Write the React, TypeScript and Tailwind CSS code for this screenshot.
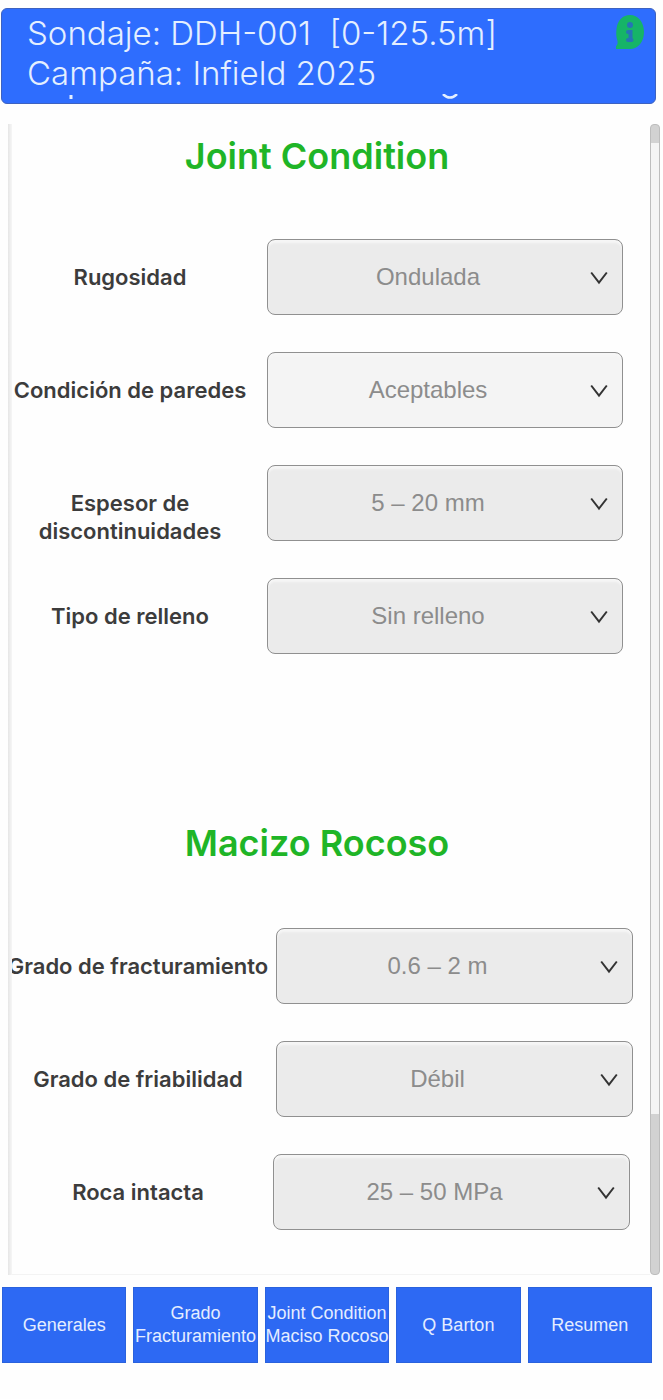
import clsx from "clsx";

type Field = {
  id: string;
  label: string;
  value: string;
  light?: boolean;
  narrow?: boolean;
};

const jointFields: Field[] = [
  { id: "rugosidad", label: "Rugosidad", value: "Ondulada" },
  { id: "paredes", label: "Condición de paredes", value: "Aceptables", light: true },
  { id: "espesor", label: "Espesor de discontinuidades", value: "5 – 20 mm" },
  { id: "relleno", label: "Tipo de relleno", value: "Sin relleno" },
];

const rockFields: Field[] = [
  { id: "fracturamiento", label: "Grado de fracturamiento", value: "0.6 – 2 m" },
  { id: "friabilidad", label: "Grado de friabilidad", value: "Débil" },
  { id: "roca", label: "Roca intacta", value: "25 – 50 MPa", narrow: true },
];

const tabs = [
  ["Generales"],
  ["Grado", "Fracturamiento"],
  ["Joint Condition", "Maciso Rocoso"],
  ["Q Barton"],
  ["Resumen"],
];

function SelectBox({ field }: { field: Field }) {
  return (
    <div className="relative min-w-0 flex-1">
      <select
        id={field.id}
        defaultValue={field.value}
        className={clsx(
          "block h-[76px] w-full appearance-none rounded-lg border border-[#909090] pr-10 pl-1.5 text-center font-['Liberation_Sans',Arial,sans-serif] text-[24px] text-[#8c8c8c] shadow-[inset_0_3px_2px_#f6f6f6]",
          field.light ? "bg-[#f4f4f4]" : "bg-[#ebebeb]"
        )}
      >
        <option>{field.value}</option>
      </select>
      <svg
        viewBox="0 0 18 14"
        className="pointer-events-none absolute top-8 right-[15px] h-3.5 w-[18px]"
        fill="none"
        stroke="#333"
        strokeWidth="2"
      >
        <path d="M1.2 1.5 L9 11.5 L16.8 1.5" />
      </svg>
    </div>
  );
}

function Header() {
  return (
    <header className="relative mt-2 mr-[7px] ml-px h-24 overflow-hidden rounded-md border border-[#3d62c0] bg-[#2e6dfe] pt-1 pl-[25px] text-[33px] leading-10 font-light text-[#e4efff]">
      <p className="whitespace-pre">Sondaje: DDH-001  [0-125.5m]</p>
      <p>Campaña: Infield 2025</p>
      <button aria-label="Información" className="absolute top-1.5 right-[11px]">
        <svg viewBox="0 0 28 34" className="h-[34px] w-7">
          <path
            d="M0 34 V31 Q2 30 1.5 26 C0 22 0 18 0.5 14 C1.5 5 7 0 14 0 C22 0 28 7 28 17 C28 27 22 34 14 34 Z"
            fill="#16b467"
          />
          <circle cx="14" cy="10" r="3" fill="#2574b5" />
          <path
            d="M12 17 H14.5 V25 M12 25 H15.5"
            fill="none"
            stroke="#2574b5"
            strokeWidth="4"
            strokeLinecap="round"
          />
        </svg>
      </button>
      {/* tail of the scrolled-out line */}
      <svg viewBox="0 0 390 6" className="absolute bottom-[3px] left-[66px] h-1.5 w-[390px]">
        <path d="M3 1 V5" stroke="#e4efff" strokeWidth="3" />
        <path d="M375 0 Q382 7 389 0" fill="none" stroke="#e4efff" strokeWidth="2.5" />
      </svg>
    </header>
  );
}

export default function App() {
  return (
    <div className="bg-[#fefefe] font-['Inter',sans-serif]">
      <div className="flow-root">
        <Header />
      </div>

      <main className="mt-5 mr-[3px] ml-2 flex">
        <div className="w-1 bg-linear-to-r from-[#e6e6e6] to-[#f6f6f6]" />
        <div className="min-w-0 flex-1 overflow-hidden border-b border-[#f3f3f3] pb-11">
          <section>
            <h2 className="pt-2 pr-7 text-center text-[36px] leading-[48px] font-semibold text-[#1fb527]">
              Joint Condition
            </h2>
            <div className="mt-[59px] flex flex-col gap-[37px] pr-[27px]">
              {jointFields.map((field) => (
                <div key={field.id} className="flex h-[76px] items-start gap-[11px]">
                  <label
                    htmlFor={field.id}
                    className="w-[244px] shrink-0 pt-6 pr-2 text-center text-[22px] leading-7 font-semibold text-[#3c3c3c]"
                  >
                    {field.label}
                  </label>
                  <SelectBox field={field} />
                </div>
              ))}
            </div>
          </section>

          <section className="mt-[165px]">
            <h2 className="pr-7 text-center text-[36px] leading-[48px] font-semibold text-[#1fb527]">
              Macizo Rocoso
            </h2>
            <div className="mt-[61px] flex flex-col gap-[37px]">
              {rockFields.map((field) => (
                <div
                  key={field.id}
                  className={clsx("flex h-[76px] items-start", field.narrow ? "gap-[9px] pr-5" : "gap-3 pr-[17px]")}
                >
                  <label
                    htmlFor={field.id}
                    className="flex w-[252px] shrink-0 justify-center pt-6 text-[22px] leading-7 font-semibold whitespace-nowrap text-[#3c3c3c]"
                  >
                    {field.label}
                  </label>
                  <SelectBox field={field} />
                </div>
              ))}
            </div>
          </section>
        </div>

        {/* Scroll track and thumb */}
        <div className="flex w-2.5 flex-col rounded-sm border border-[#bdbdbd] bg-[#d2d2d2] pt-[18px] pb-40">
          <div className="flex-1 bg-[#f4f4f4]" />
        </div>
      </main>

      <nav className="mt-3 mr-[11px] ml-0.5 grid grid-cols-5 gap-[7px] pb-9">
        {tabs.map((lines) => (
          <button
            key={lines[0]}
            className="flex h-[76px] flex-col items-center justify-center border border-[#2a62dd] bg-[#2d69f3] font-['Liberation_Sans',Arial,sans-serif] text-[18px] leading-[23px] whitespace-nowrap text-[#e4edff]"
          >
            {lines.map((line) => (
              <span key={line}>{line}</span>
            ))}
          </button>
        ))}
      </nav>
    </div>
  );
}
